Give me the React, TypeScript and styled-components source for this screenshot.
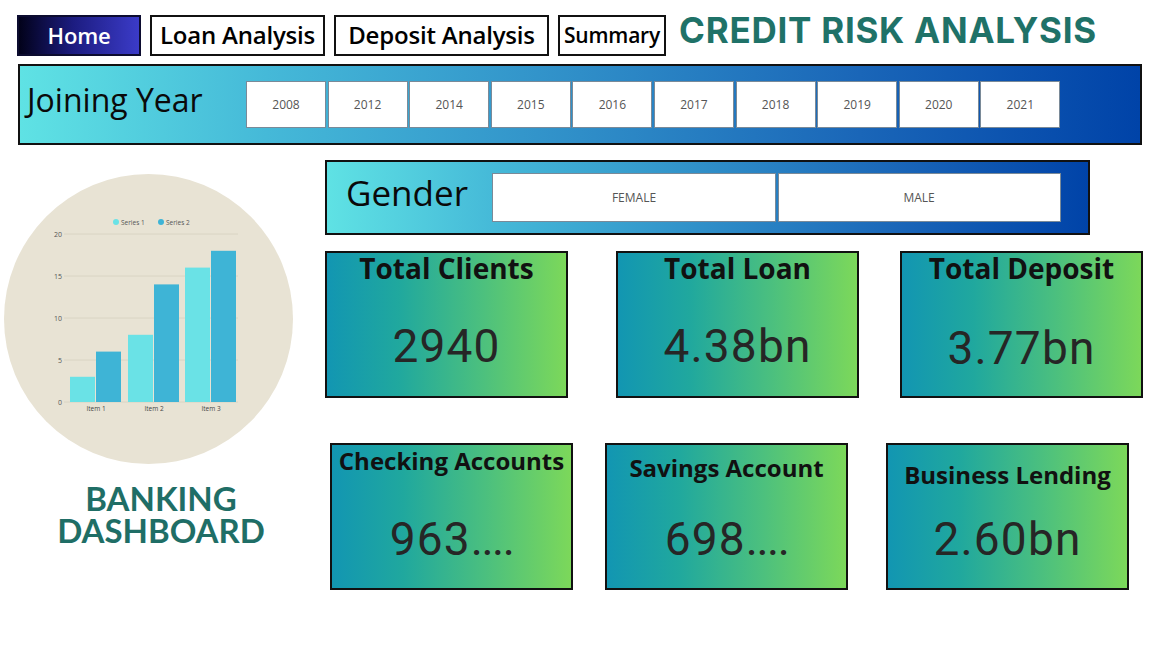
import React from "react";
import styled, { createGlobalStyle } from "styled-components";

const Global = createGlobalStyle`
  html, body { margin: 0; padding: 0; background: #ffffff; }
  body { font-family: "Open Sans", "Liberation Sans", sans-serif; width: 1165px; height: 649px; overflow: hidden; }
  * { box-sizing: border-box; }
`;

const Page = styled.div`
  width: 1165px;
  height: 649px;
  display: flex;
  flex-direction: column;
`;

const Nav = styled.nav`
  display: flex;
  align-items: flex-start;
  padding: 15px 0 0 17px;
  height: 56px;
`;

const NavButton = styled.div<{ $active?: boolean; $w: number; $size: number }>`
  width: ${(p) => p.$w}px;
  height: 41px;
  margin-right: 9px;
  display: flex;
  align-items: center;
  justify-content: center;
  font-family: "Open Sans", sans-serif;
  font-weight: 600;
  font-size: ${(p) => p.$size}px;
  letter-spacing: -0.2px;
  color: ${(p) => (p.$active ? "#ffffff" : "#000000")};
  background: ${(p) => (p.$active ? "linear-gradient(90deg, #02021a 0%, #1c1c80 45%, #3b3bc8 100%)" : "#ffffff")};
  border: 2px solid ${(p) => (p.$active ? "#0c0c30" : "#111111")};
  padding-bottom: 2px;
`;

const Title = styled.h1`
  margin: -6px 0 0 4px;
  font-family: "Inter", sans-serif;
  font-weight: 700;
  font-size: 35px;
  color: #1f7268;
  letter-spacing: 0.75px;
`;

const FilterBar = styled.div<{ $w: number; $h: number }>`
  width: ${(p) => p.$w}px;
  height: ${(p) => p.$h}px;
  border: 2px solid #111;
  background: linear-gradient(90deg, #5fe2e4 0%, #45b9d8 22%, #2f8ec8 50%, #1a66b8 75%, #0043a8 100%);
  display: flex;
  align-items: center;
`;

const YearBar = styled(FilterBar)`
  margin: 8px 0 0 18px;
`;

const FilterLabel = styled.div<{ $size: number; $w: number; $pad: number }>`
  width: ${(p) => p.$w}px;
  font-family: "Open Sans", sans-serif;
  font-size: ${(p) => p.$size}px;
  color: #0a0a0a;
  padding-left: ${(p) => p.$pad}px;
  padding-bottom: 10px;
  white-space: nowrap;
`;

const Chips = styled.div`
  display: flex;
  gap: 1.6px;
`;

const Chip = styled.div<{ $w: number; $h: number }>`
  width: ${(p) => p.$w}px;
  height: ${(p) => p.$h}px;
  background: #ffffff;
  border: 1px solid #7a8a98;
  display: flex;
  align-items: center;
  justify-content: center;
  font-family: "Open Sans", sans-serif;
  font-size: 12px;
  color: #555;
`;

const Main = styled.div`
  display: flex;
`;

const Left = styled.div`
  width: 325px;
  padding: 29px 0 0 4px;
  display: flex;
  flex-direction: column;
`;

const Circle = styled.div`
  width: 289px;
  height: 290px;
  border-radius: 50%;
  background: #e8e3d4;
  display: flex;
  align-items: center;
  justify-content: center;
`;

const Brand = styled.div`
  margin-top: 18px;
  width: 310px;
  padding-left: 4px;
  text-align: center;
  font-family: "Lato", sans-serif;
  font-weight: 700;
  font-size: 33px;
  color: #1f6e66;
`;

const BrandLine = styled.div`
  line-height: 32px;
  height: 32px;
`;

const Right = styled.div`
  display: flex;
  flex-direction: column;
  padding-top: 15px;
`;

const GenderBar = styled(FilterBar)``;

const CardRow = styled.div<{ $top: number; $left: number; $gap1: number; $gap2: number }>`
  display: flex;
  margin-top: ${(p) => p.$top}px;
  padding-left: ${(p) => p.$left}px;
  & > :nth-child(1) { margin-right: ${(p) => p.$gap1}px; }
  & > :nth-child(2) { margin-right: ${(p) => p.$gap2}px; }
`;

const Card = styled.div`
  width: 243px;
  height: 147px;
  border: 2px solid #111;
  background: linear-gradient(90deg, #1296b2 0%, #20a89e 30%, #4cc07e 65%, #7cd85a 100%);
  display: flex;
  flex-direction: column;
  align-items: center;
`;

const CardTitle = styled.div<{ $size: number; $top: number }>`
  margin-top: ${(p) => p.$top}px;
  font-family: "Open Sans", sans-serif;
  font-weight: 700;
  font-size: ${(p) => p.$size}px;
  line-height: 1.2;
  color: #111;
  white-space: nowrap;
`;

const CardValue = styled.div<{ $top: number }>`
  margin-top: ${(p) => p.$top}px;
  font-family: "Roboto", sans-serif;
  font-weight: 400;
  font-size: 46px;
  letter-spacing: 1.2px;
  line-height: 1;
  color: #262626;
`;

const Dots = styled.span`
  letter-spacing: -1.5px;
`;

const years = ["2008", "2012", "2014", "2015", "2016", "2017", "2018", "2019", "2020", "2021"];

const Chart = () => {
  const y0 = 228;
  const u = 8.4;
  const bars = [
    { x: 66, s1: 3, s2: 6 },
    { x: 124, s1: 8, s2: 14 },
    { x: 181, s1: 16, s2: 18 },
  ];
  return (
    <svg width="289" height="290" viewBox="0 0 289 290">
      {[0, 5, 10, 15, 20].map((v) => (
        <g key={v}>
          <line x1="60" x2="234" y1={y0 - v * u} y2={y0 - v * u} stroke="#d6d0bf" strokeWidth="0.8" />
          <text x="58" y={y0 - v * u + 3} fontSize="7" fill="#555" textAnchor="end" fontFamily="Open Sans, sans-serif">
            {v}
          </text>
        </g>
      ))}
      <circle cx="112" cy="48" r="3" fill="#6ae2e6" />
      <text x="117" y="50.5" fontSize="6.5" fill="#555" fontFamily="Open Sans, sans-serif">Series 1</text>
      <circle cx="157" cy="48" r="3" fill="#3eb4d6" />
      <text x="162" y="50.5" fontSize="6.5" fill="#555" fontFamily="Open Sans, sans-serif">Series 2</text>
      {bars.map((b, i) => (
        <g key={i}>
          <rect x={b.x} y={y0 - b.s1 * u} width="25" height={b.s1 * u} fill="#6ae2e6" />
          <rect x={b.x + 26} y={y0 - b.s2 * u} width="25" height={b.s2 * u} fill="#3eb4d6" />
          <text x={b.x + 26} y={y0 + 9} fontSize="6.5" fill="#444" textAnchor="middle" fontFamily="Open Sans, sans-serif">
            {`Item ${i + 1}`}
          </text>
        </g>
      ))}
    </svg>
  );
};

export default function App() {
  return (
    <Page>
      <Global />
      <Nav>
        <NavButton $active $w={124} $size={22}>Home</NavButton>
        <NavButton $w={175} $size={24}>Loan Analysis</NavButton>
        <NavButton $w={215} $size={24}>Deposit Analysis</NavButton>
        <NavButton $w={108} $size={21}>Summary</NavButton>
        <Title>CREDIT RISK ANALYSIS</Title>
      </Nav>
      <YearBar $w={1124} $h={81}>
        <FilterLabel $size={32} $w={226} $pad={7}>Joining Year</FilterLabel>
        <Chips>
          {years.map((y) => (
            <Chip key={y} $w={80} $h={47}>{y}</Chip>
          ))}
        </Chips>
      </YearBar>
      <Main>
        <Left>
          <Circle>
            <Chart />
          </Circle>
          <Brand>
            <BrandLine>BANKING</BrandLine>
            <BrandLine>DASHBOARD</BrandLine>
          </Brand>
        </Left>
        <Right>
          <GenderBar $w={765} $h={75}>
            <FilterLabel $size={35} $w={165} $pad={19}>Gender</FilterLabel>
            <Chips>
              <Chip $w={284} $h={49}>FEMALE</Chip>
              <Chip $w={283} $h={49}>MALE</Chip>
            </Chips>
          </GenderBar>
          <CardRow $top={16} $left={0} $gap1={48} $gap2={41}>
            <Card>
              <CardTitle $size={28} $top={-1}>Total Clients</CardTitle>
              <CardValue $top={37}>2940</CardValue>
            </Card>
            <Card>
              <CardTitle $size={28} $top={-1}>Total Loan</CardTitle>
              <CardValue $top={37}>4.38bn</CardValue>
            </Card>
            <Card>
              <CardTitle $size={28} $top={-1}>Total Deposit</CardTitle>
              <CardValue $top={39}>3.77bn</CardValue>
            </Card>
          </CardRow>
          <CardRow $top={45} $left={5} $gap1={32} $gap2={38}>
            <Card>
              <CardTitle $size={24} $top={2}>Checking Accounts</CardTitle>
              <CardValue $top={40}>963<Dots>....</Dots></CardValue>
            </Card>
            <Card>
              <CardTitle $size={24} $top={9}>Savings Account</CardTitle>
              <CardValue $top={33}>698<Dots>....</Dots></CardValue>
            </Card>
            <Card>
              <CardTitle $size={24} $top={16}>Business Lending</CardTitle>
              <CardValue $top={26}>2.60bn</CardValue>
            </Card>
          </CardRow>
        </Right>
      </Main>
    </Page>
  );
}
